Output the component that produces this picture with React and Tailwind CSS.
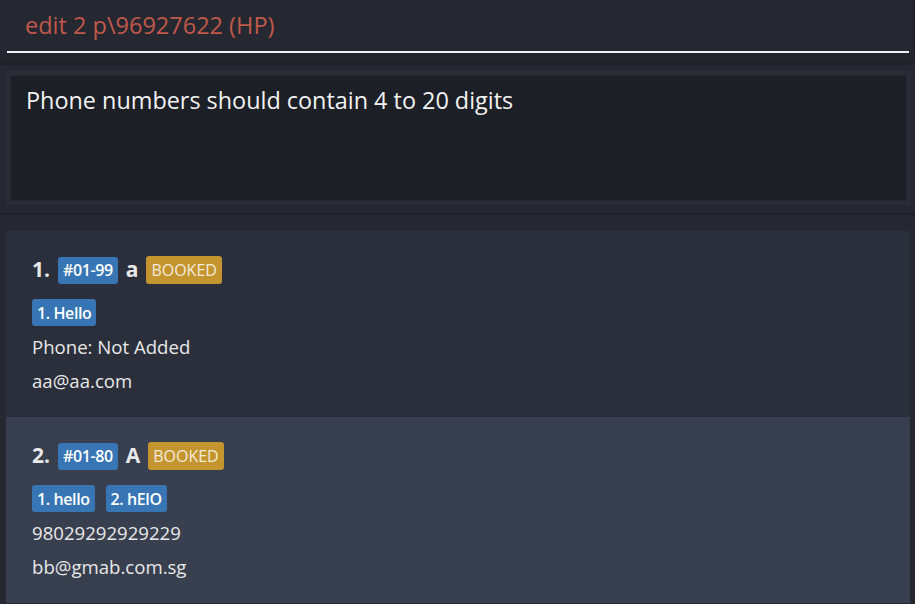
import React from "react";

const PEOPLE = [
  {
    index: 1,
    unit: "#01-99",
    name: "a",
    tags: ["1. Hello"],
    phone: "Phone: Not Added",
    email: "aa@aa.com",
    bg: "bg-[#2b2f3b]",
  },
  {
    index: 2,
    unit: "#01-80",
    name: "A",
    tags: ["1. hello", "2. hElO"],
    phone: "98029292929229",
    email: "bb@gmab.com.sg",
    bg: "bg-[#383f4e]",
  },
];

const PersonCard = ({ person }) => {
  return (
    <div className={`${person.bg} pl-[26px] pt-[25px] h-[186px]`}>
      <div className="flex items-center h-[28px] gap-2">
        <span className="text-[21px] font-bold text-[#e8e8e8]">{person.index}.</span>
        <span className="bg-[#3775b4] text-white text-[16px] tracking-[-0.4px] font-semibold rounded-[3px] px-[5px] h-[27px] flex items-center">
          {person.unit}
        </span>
        <span className="text-[21px] font-bold text-[#e8e8e8]">{person.name}</span>
        <span className="bg-[#c4952f] text-[#f2eadb] text-[16px] rounded-[3px] px-[5px] h-[28px] flex items-center">
          BOOKED
        </span>
      </div>
      <div className="flex gap-[11px] mt-[15px] h-[27px]">
        {person.tags.map((tag) => (
          <span
            key={tag}
            className="bg-[#3775b4] text-white text-[16px] tracking-[-0.4px] font-semibold rounded-[3px] px-[5px] flex items-center"
          >
            {tag}
          </span>
        ))}
      </div>
      <div className="text-[18.6px] text-[#e8e8e8] leading-[34px] mt-[4px]">{person.phone}</div>
      <div className="text-[18.6px] text-[#e8e8e8] leading-[34px]">{person.email}</div>
    </div>
  );
};

const App = () => {
  return (
    <div
      className="w-[915px] h-[604px] overflow-hidden bg-[#22252c] flex flex-col"
      style={{ fontFamily: '"Open Sans", "Noto Sans", sans-serif' }}
    >
      {/* command box */}
      <div className="h-[54px] bg-[#252830] pl-[7px] pr-[4px] border-r-2 border-[#1e2127]">
        <div className="h-[53px] border-b-2 border-[#f0f0f0] pl-[18px] flex items-center text-[23.5px] text-[#c0584b]">
          edit 2 p\96927622 (HP)
        </div>
      </div>

      {/* result display */}
      <div className="mt-[9px] border-t-2 border-[#1d2026] bg-[#252830] px-[6px] pt-[6px] pb-[8px] pr-[4px]">
        <div className="border-[4px] border-[#2a2d36] h-[134px]">
          <div className="h-full bg-[#1c1f26] border border-[#24272f] pl-[15px] pt-[7px] text-[23.4px] text-[#f2f2f2]">
            Phone numbers should contain 4 to 20 digits
          </div>
        </div>
      </div>

      {/* person list */}
      <div className="flex-1 border-t-2 border-[#1d2026] bg-[#252830] pt-[16px] pl-[6px] pr-[5px] flex">
        <div className="flex-1 flex flex-col">
          {PEOPLE.map((p) => (
            <PersonCard key={p.index} person={p} />
          ))}
        </div>
      </div>
    </div>
  );
};

export default App;
